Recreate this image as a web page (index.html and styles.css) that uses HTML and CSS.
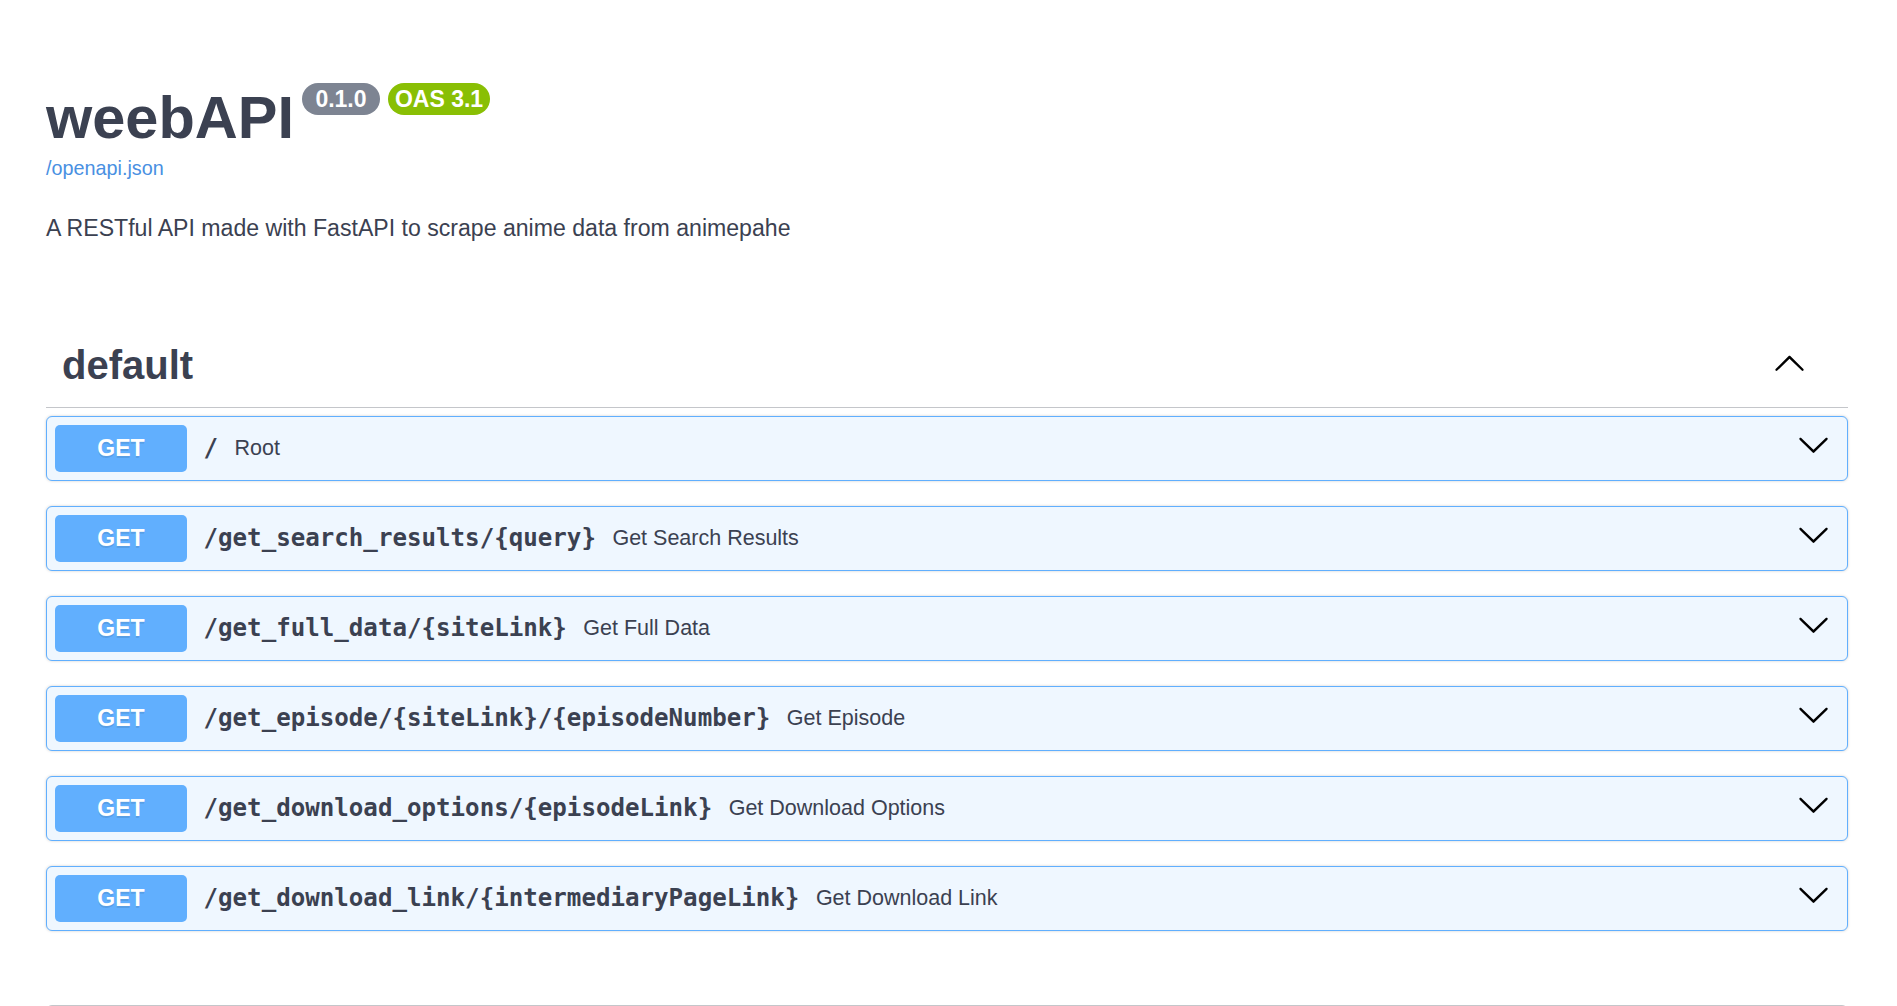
FILE: index.html
```html
<!DOCTYPE html>
<html lang="en">
<head>
<meta charset="utf-8">
<title>weebAPI - Swagger UI</title>
<link rel="stylesheet" href="styles.css">
</head>
<body>
<div class="wrapper">
  <div class="info">
    <div class="title-row">
      <h2 class="title">weebAPI</h2>
      <span class="badge version"> 0.1.0 </span>
      <span class="badge oas">OAS 3.1</span>
    </div>
    <a class="link" href="#">/openapi.json</a>
    <p class="description">A RESTful API made with FastAPI to scrape anime data from animepahe</p>
  </div>

  <section class="tag-section">
    <h3 class="tag">
      <span class="tag-name">default</span>
      <svg class="arrow-up" width="33" height="33" viewBox="0 0 20 20" aria-hidden="true"><path d="M17.418 14.908c.272.268.709.268.979 0s.271-.701 0-.969l-7.908-7.83c-.27-.268-.707-.268-.979 0l-7.908 7.83c-.27.268-.27.701 0 .969.271.268.709.268.979 0L10 7.767l7.418 7.141z"/></svg>
    </h3>

    <div class="opblock">
      <span class="method">GET</span>
      <span class="path">/</span>
      <span class="summary">Root</span>
      <svg class="arrow" width="33" height="33" viewBox="0 0 20 20" aria-hidden="true"><path d="M17.418 6.109c.272-.268.709-.268.979 0s.271.701 0 .969l-7.908 7.83c-.27.268-.707.268-.979 0l-7.908-7.83c-.27-.268-.27-.701 0-.969.271-.268.709-.268.979 0L10 13.25l7.418-7.141z"/></svg>
    </div>
    <div class="opblock">
      <span class="method">GET</span>
      <span class="path">/get_search_results/{query}</span>
      <span class="summary">Get Search Results</span>
      <svg class="arrow" width="33" height="33" viewBox="0 0 20 20" aria-hidden="true"><path d="M17.418 6.109c.272-.268.709-.268.979 0s.271.701 0 .969l-7.908 7.83c-.27.268-.707.268-.979 0l-7.908-7.83c-.27-.268-.27-.701 0-.969.271-.268.709-.268.979 0L10 13.25l7.418-7.141z"/></svg>
    </div>
    <div class="opblock">
      <span class="method">GET</span>
      <span class="path">/get_full_data/{siteLink}</span>
      <span class="summary">Get Full Data</span>
      <svg class="arrow" width="33" height="33" viewBox="0 0 20 20" aria-hidden="true"><path d="M17.418 6.109c.272-.268.709-.268.979 0s.271.701 0 .969l-7.908 7.83c-.27.268-.707.268-.979 0l-7.908-7.83c-.27-.268-.27-.701 0-.969.271-.268.709-.268.979 0L10 13.25l7.418-7.141z"/></svg>
    </div>
    <div class="opblock">
      <span class="method">GET</span>
      <span class="path">/get_episode/{siteLink}/{episodeNumber}</span>
      <span class="summary">Get Episode</span>
      <svg class="arrow" width="33" height="33" viewBox="0 0 20 20" aria-hidden="true"><path d="M17.418 6.109c.272-.268.709-.268.979 0s.271.701 0 .969l-7.908 7.83c-.27.268-.707.268-.979 0l-7.908-7.83c-.27-.268-.27-.701 0-.969.271-.268.709-.268.979 0L10 13.25l7.418-7.141z"/></svg>
    </div>
    <div class="opblock">
      <span class="method">GET</span>
      <span class="path">/get_download_options/{episodeLink}</span>
      <span class="summary">Get Download Options</span>
      <svg class="arrow" width="33" height="33" viewBox="0 0 20 20" aria-hidden="true"><path d="M17.418 6.109c.272-.268.709-.268.979 0s.271.701 0 .969l-7.908 7.83c-.27.268-.707.268-.979 0l-7.908-7.83c-.27-.268-.27-.701 0-.969.271-.268.709-.268.979 0L10 13.25l7.418-7.141z"/></svg>
    </div>
    <div class="opblock">
      <span class="method">GET</span>
      <span class="path">/get_download_link/{intermediaryPageLink}</span>
      <span class="summary">Get Download Link</span>
      <svg class="arrow" width="33" height="33" viewBox="0 0 20 20" aria-hidden="true"><path d="M17.418 6.109c.272-.268.709-.268.979 0s.271.701 0 .969l-7.908 7.83c-.27.268-.707.268-.979 0l-7.908-7.83c-.27-.268-.27-.701 0-.969.271-.268.709-.268.979 0L10 13.25l7.418-7.141z"/></svg>
    </div>
  </section>

  <section class="models"></section>
</div>
</body>
</html>
```
FILE: styles.css
```css
html, body {
  margin: 0;
  padding: 0;
  background: #ffffff;
}

body {
  font-family: "Liberation Sans", Arial, sans-serif;
  color: #3b4151;
}

.wrapper {
  padding: 0 49px 0 46px;
}

.info {
  padding-top: 84px;
}

.title-row {
  display: flex;
  align-items: flex-start;
}

.title {
  margin: 0;
  font-size: 59.5px;
  line-height: 68px;
  font-weight: 700;
  color: #3b4151;
}

.badge {
  display: inline-block;
  margin-top: -1px;
  padding: 3px 7px;
  border-radius: 57px;
  font-size: 23px;
  line-height: 26px;
  font-weight: 700;
  color: #ffffff;
  white-space: pre;
}

.version {
  margin-left: 8px;
  background: #7d8492;
}

.oas {
  margin-left: 8px;
  background: #89bf04;
}

.link {
  display: block;
  margin-top: 4px;
  font-size: 19.8px;
  line-height: 24px;
  color: #4990e2;
  text-decoration: none;
}

.description {
  margin: 31px 0 0;
  font-size: 23.1px;
  line-height: 34.5px;
  color: #3b4151;
}

.tag-section {
  margin-top: 77px;
}

.tag {
  display: flex;
  align-items: center;
  margin: 0 0 8px;
  padding: 18px 42px 18px 16px;
  border-bottom: 1px solid rgba(59, 65, 81, 0.3);
}

.tag-name {
  flex: 1;
  font-size: 40px;
  line-height: 48px;
  font-weight: 700;
  color: #3b4151;
}

.arrow-up {
  margin-bottom: 5px;
  fill: #000000;
}

.opblock {
  display: flex;
  align-items: center;
  box-sizing: border-box;
  height: 65px;
  margin-bottom: 25px;
  padding: 0 8px;
  border: 1px solid #61affe;
  border-radius: 6px;
  background: #eff7ff;
  box-shadow: 0 0 3px rgba(0, 0, 0, 0.19);
}

.method {
  flex: none;
  width: 132px;
  height: 47px;
  border-radius: 5px;
  background: #61affe;
  color: #ffffff;
  font-size: 23px;
  font-weight: 700;
  line-height: 47px;
  text-align: center;
  text-shadow: 0 1.6px 0 rgba(0, 0, 0, 0.1);
}

.path {
  flex: none;
  padding: 0 16.5px;
  font-family: "DejaVu Sans Mono", "Liberation Mono", monospace;
  font-size: 24.15px;
  font-weight: 700;
  color: #3b4151;
}

.summary {
  flex: 1;
  font-size: 21.5px;
  color: #3b4151;
}

.arrow {
  flex: none;
  margin: 0 9.5px 7px 0;
  fill: #000000;
}

.models {
  margin-top: 74px;
  height: 120px;
  border: 1px solid rgba(59, 65, 81, 0.3);
  border-radius: 6px;
}
```
